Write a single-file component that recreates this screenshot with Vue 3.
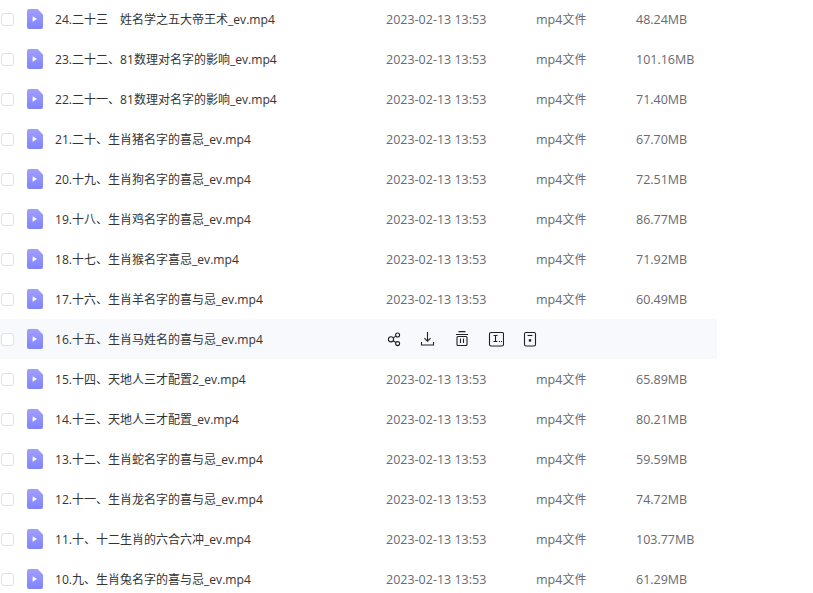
<template>
  <div class="file-list">
    <div v-for="file in files" :key="file.name" class="file-row" :class="{ active: file.active }">
      <span class="checkbox"></span>
      <svg class="file-icon" width="16" height="20" viewBox="0 0 16 20">
        <defs>
          <linearGradient :id="'g' + file.name.slice(0, 2)" x1="0" y1="0" x2="0" y2="1">
            <stop offset="0" stop-color="#a09eff" />
            <stop offset="1" stop-color="#8084fb" />
          </linearGradient>
        </defs>
        <path d="M2 0h8.6L16 5.4V18a2 2 0 0 1-2 2H2a2 2 0 0 1-2-2V2a2 2 0 0 1 2-2z" :fill="'url(#g' + file.name.slice(0, 2) + ')'" />
        <path d="M5.6 7.2v5.6L10 10z" fill="#fff" />
      </svg>
      <span class="name">
        <span v-for="(run, i) in splitRuns(file.name)" :key="i" :class="{ cjk: run.cjk }">{{ run.text }}</span>
      </span>
      <div v-if="file.active" class="actions">
        <svg width="16" height="16" viewBox="0 0 16 16" fill="none" stroke="#1f2024" stroke-width="1.1">
          <circle cx="5" cy="8.3" r="2.6" />
          <circle cx="11.6" cy="4" r="2" />
          <circle cx="11.6" cy="12.6" r="2" />
          <path d="M7.2 6.9 9.9 5.1M7.2 9.7l2.7 1.8" />
        </svg>
        <svg width="16" height="16" viewBox="0 0 16 16" fill="none" stroke="#1f2024" stroke-width="1.1">
          <path d="M7.5 1v9.2M4.4 7.2l3.1 3 3.1-3M1.5 11v3h12v-3" />
        </svg>
        <svg width="16" height="16" viewBox="0 0 16 16" fill="none" stroke="#1f2024" stroke-width="1.1">
          <path d="M2 3.5h12M4.5.6h7" />
          <rect x="3" y="5.5" width="10" height="9" rx="1" />
          <path d="M6.5 7.5V12M9.5 7.5V12" />
        </svg>
        <svg width="16" height="16" viewBox="0 0 16 16" fill="none" stroke="#1f2024" stroke-width="1.1">
          <rect x="1.5" y="1.5" width="14" height="13.5" rx="1.5" />
          <path d="M5.5 4.5h4M7.5 4.5v6M5.5 10.5h4" />
          <rect x="11" y="10" width="1" height="1" fill="#1f2024" stroke="none" />
          <rect x="13" y="10" width="1" height="1" fill="#1f2024" stroke="none" />
        </svg>
        <svg width="16" height="16" viewBox="0 0 16 16" fill="none" stroke="#1f2024" stroke-width="1.1">
          <rect x="2.5" y="1.5" width="11" height="13.5" rx="1.5" />
          <path d="M5.5 4.5h5" />
          <rect x="6.8" y="8.2" width="2.4" height="2.4" fill="#1f2024" stroke="none" />
        </svg>
      </div>
      <template v-else>
        <span class="date">2023-02-13 13:53</span>
        <span class="type">mp4<span class="cjk">文件</span></span>
        <span class="size">{{ file.size }}</span>
      </template>
    </div>
  </div>
</template>

<script setup>
const files = [
  { name: '24.二十三　姓名学之五大帝王术_ev.mp4', size: '48.24MB' },
  { name: '23.二十二、81数理对名字的影响_ev.mp4', size: '101.16MB' },
  { name: '22.二十一、81数理对名字的影响_ev.mp4', size: '71.40MB' },
  { name: '21.二十、生肖猪名字的喜忌_ev.mp4', size: '67.70MB' },
  { name: '20.十九、生肖狗名字的喜忌_ev.mp4', size: '72.51MB' },
  { name: '19.十八、生肖鸡名字的喜忌_ev.mp4', size: '86.77MB' },
  { name: '18.十七、生肖猴名字喜忌_ev.mp4', size: '71.92MB' },
  { name: '17.十六、生肖羊名字的喜与忌_ev.mp4', size: '60.49MB' },
  { name: '16.十五、生肖马姓名的喜与忌_ev.mp4', active: true },
  { name: '15.十四、天地人三才配置2_ev.mp4', size: '65.89MB' },
  { name: '14.十三、天地人三才配置_ev.mp4', size: '80.21MB' },
  { name: '13.十二、生肖蛇名字的喜与忌_ev.mp4', size: '59.59MB' },
  { name: '12.十一、生肖龙名字的喜与忌_ev.mp4', size: '74.72MB' },
  { name: '11.十、十二生肖的六合六冲_ev.mp4', size: '103.77MB' },
  { name: '10.九、生肖兔名字的喜与忌_ev.mp4', size: '61.29MB' }
]

// 中文和数字字母的字号不同，拆开渲染
const splitRuns = (name) => {
  return name.match(/[^\x00-\x7f]+|[\x00-\x7f]+/g).map(text => ({
    text,
    cjk: text.charCodeAt(0) > 127
  }))
}
</script>

<style>
html,
body {
  background: #fff;
  overflow: hidden;
}
</style>

<style scoped>
.file-list {
  width: 717px;
  margin-top: -1px;
  font-family: "Open Sans", "Noto Sans CJK SC", sans-serif;
  font-size: 12.5px;
}

.file-row {
  display: flex;
  align-items: center;
  height: 40px;
  padding-left: 1px;
  color: #666a73;
}

.file-row.active {
  background: #f8f9fc;
}

.cjk {
  font-family: "Noto Sans CJK SC", sans-serif;
  font-size: 12px;
}

.checkbox {
  flex: none;
  box-sizing: border-box;
  width: 13px;
  height: 13px;
  border: 1px solid #dfe0e3;
  border-radius: 3px;
  background: #fff;
}

.file-icon {
  flex: none;
  margin-left: 13px;
}

.name {
  flex: none;
  width: 331px;
  margin-left: 12px;
  font-size: 12.1px;
  color: #333;
  white-space: pre;
}

.date {
  width: 150px;
}

.type {
  width: 100px;
}

.actions {
  display: flex;
  gap: 18px;
}
</style>
